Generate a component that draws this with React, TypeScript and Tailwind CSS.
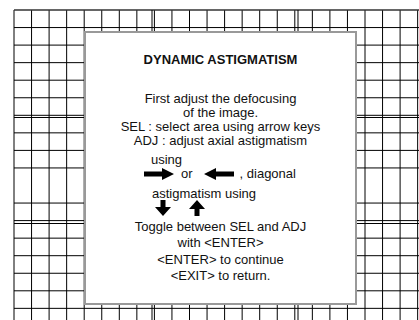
import React from 'react';

// test-pattern grid behind the menu panel
const STEP = 17.55;
const cols = Array.from({ length: 24 }, (_, i) => 14 + i * STEP);
const rows = Array.from({ length: 18 }, (_, j) => 10 + j * STEP).filter((_, j) => j !== 10);

const GridPattern: React.FC = () => (
  <svg className="absolute inset-0" width={419} height={320} viewBox="0 0 419 320">
    {cols.map(x => (
      <line key={`v${x}`} x1={x} y1={10} x2={x} y2={320} stroke="#000" strokeWidth={1} />
    ))}
    {rows.map((y, j) => (
      <line
        key={`h${y}`}
        x1={14}
        y1={y}
        x2={419}
        y2={y}
        stroke={j === 0 ? '#333' : '#000'}
        strokeWidth={j === 0 ? 1.6 : 1}
      />
    ))}
    <line x1={152} y1={10} x2={152} y2={320} stroke="#000" strokeWidth={1} />
    <line x1={298} y1={10} x2={298} y2={320} stroke="#000" strokeWidth={1} />
    <line x1={14} y1={117.5} x2={419} y2={117.5} stroke="#000" strokeWidth={1} />
    <line x1={14} y1={223.5} x2={419} y2={223.5} stroke="#000" strokeWidth={1} />
  </svg>
);

type Dir = 'right' | 'left' | 'down' | 'up';

const Arrow: React.FC<{ dir: Dir }> = ({ dir }) => {
  const rot = { right: 0, left: 180, down: 90, up: -90 }[dir];
  const horizontal = dir === 'right' || dir === 'left';
  const w = horizontal ? 30 : 16;
  const h = horizontal ? 12 : 16;
  return (
    <svg width={w} height={h} viewBox={horizontal ? '0 0 30 12' : '0 0 16 16'}>
      {horizontal ? (
        <polygon
          points="0,3.5 18,3.5 18,0 30,6 18,12 18,8.5 0,8.5"
          fill="#000"
          transform={`rotate(${rot} 15 6)`}
        />
      ) : (
        <polygon
          points="0,5.5 7,5.5 7,0 16,8 7,16 7,10.5 0,10.5"
          fill="#000"
          transform={`rotate(${rot} 8 8)`}
        />
      )}
    </svg>
  );
};

export default function App() {
  return (
    <div
      className="relative w-[419px] h-[320px] overflow-hidden bg-white text-[#111]"
      style={{ fontFamily: '"Liberation Sans", Arial, sans-serif' }}
    >
      <GridPattern />
      <div className="relative ml-[84px] mt-[31px] w-[273px] h-[274px] border-2 border-[#999] bg-white">
        <div className="pt-[19px] text-center text-[13px] font-bold leading-[16px]">
          DYNAMIC ASTIGMATISM
        </div>

        <div className="mt-[24px] text-center text-[13px] leading-[14px]">
          <div>First adjust the defocusing</div>
          <div>of the image.</div>
          <div>SEL : select area using arrow keys</div>
          <div>ADJ : adjust axial astigmatism</div>
        </div>

        <div className="mt-[4px] text-[13px] leading-[16px]">
          <div className="pl-[65px]">using</div>
          <div className="flex items-center pl-[58px] h-[24px] -mt-[6px]">
            <Arrow dir="right" />
            <span className="ml-[7px]">or</span>
            <span className="ml-[11px]">
              <Arrow dir="left" />
            </span>
            <span className="ml-[6px]">, diagonal</span>
          </div>
          <div className="pl-[66px]">astigmatism using</div>
          <div className="flex pl-[69px] -mt-[2px]">
            <Arrow dir="down" />
            <span className="ml-[18px]">
              <Arrow dir="up" />
            </span>
          </div>
        </div>

        <div className="mt-[3px] text-center text-[13px] leading-[16.3px]">
          <div>Toggle between SEL and ADJ</div>
          <div>with &lt;ENTER&gt;</div>
          <div>&lt;ENTER&gt; to continue</div>
          <div>&lt;EXIT&gt; to return.</div>
        </div>
      </div>
    </div>
  );
}
